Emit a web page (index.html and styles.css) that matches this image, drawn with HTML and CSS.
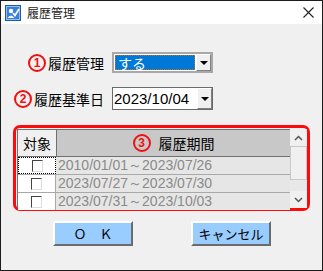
FILE: index.html
```html
<!DOCTYPE html>
<html lang="ja">
<head>
    <meta charset="UTF-8">
    <title>履歴管理</title>
    <link rel="stylesheet" href="styles.css">
</head>
<body>
    <div class="window">
        <div class="titlebar">
            <svg class="app-icon" width="16" height="16" viewBox="0 0 16 16">
                <rect x="0.5" y="0.5" width="15" height="15" fill="#3b7fd4" stroke="#1f5aa8"/>
                <rect x="1.5" y="1.5" width="13" height="13" fill="none" stroke="#8fc0f2"/>
                <circle cx="6" cy="6" r="2.2" fill="#fff"/>
                <path d="M2.5 13 Q6 8 9.5 13 Z" fill="#fff"/>
                <path d="M8 8 L10 10.5 L14 4" fill="none" stroke="#fff" stroke-width="1.8"/>
            </svg>
            <span class="title">履歴管理</span>
            <svg class="close" width="11" height="11" viewBox="0 0 11 11">
                <path d="M0.5 0.5 L10.5 10.5 M10.5 0.5 L0.5 10.5" stroke="#222" stroke-width="1.1"/>
            </svg>
        </div>
        <div class="content">
            <div class="form-row">
                <div class="label"><span class="num">1</span>履歴管理</div>
                <div class="combo light">
                    <div class="combo-value selected"><span>する</span></div>
                    <div class="combo-arrow"></div>
                </div>
            </div>
            <div class="form-row second">
                <div class="label"><span class="num">2</span>履歴基準日</div>
                <div class="combo dark">
                    <div class="combo-value date">2023/10/04</div>
                    <div class="combo-arrow"></div>
                </div>
            </div>
            <div class="history">
                <div class="grid">
                    <div class="head">
                        <div class="c1">対象</div>
                        <div class="c2"><span class="num">3</span>履歴期間</div>
                    </div>
                    <div class="row">
                        <div class="c1 focus"><span class="check"></span></div>
                        <div class="c2">2010/01/01～2023/07/26</div>
                    </div>
                    <div class="row">
                        <div class="c1"><span class="check"></span></div>
                        <div class="c2">2023/07/27～2023/07/30</div>
                    </div>
                    <div class="row">
                        <div class="c1"><span class="check"></span></div>
                        <div class="c2">2023/07/31～2023/10/03</div>
                    </div>
                </div>
                <div class="scrollbar">
                    <div class="sb-btn">
                        <svg width="9" height="6" viewBox="0 0 9 6"><path d="M1 5 L4.5 1.5 L8 5" fill="none" stroke="#555" stroke-width="1.5"/></svg>
                    </div>
                    <div class="sb-thumb"></div>
                    <div class="sb-track"></div>
                    <div class="sb-btn">
                        <svg width="9" height="6" viewBox="0 0 9 6"><path d="M1 1 L4.5 4.5 L8 1" fill="none" stroke="#555" stroke-width="1.5"/></svg>
                    </div>
                </div>
            </div>
            <div class="buttons">
                <button class="btn">Ｏ　Ｋ</button>
                <button class="btn">キャンセル</button>
            </div>
        </div>
    </div>
</body>
</html>
```

FILE: styles.css
```css
body {
    margin: 0;
    font-family: "Noto Sans CJK JP", sans-serif;
    color: #000;
}
.window {
    width: 323px;
    height: 271px;
    box-sizing: border-box;
    border: 1px solid #1c1c1c;
    background-color: #f0f0f0;
}
.titlebar {
    height: 23px;
    background-color: #fff;
    display: flex;
    align-items: center;
    padding-left: 4px;
}
.app-icon {
    margin-right: 6px;
}
.title {
    font-size: 12px;
    color: #222;
    flex: 1;
}
.close {
    margin-right: 8px;
}
.content {
    padding-top: 28px;
}
.form-row {
    display: flex;
    align-items: center;
    height: 21px;
}
.form-row.second {
    margin-top: 14px;
    height: 23px;
}
.label {
    width: 103px;
    display: flex;
    justify-content: flex-end;
    align-items: center;
    font-size: 14px;
    margin-right: 8px;
    white-space: nowrap;
}
.num {
    display: inline-flex;
    justify-content: center;
    align-items: center;
    width: 14px;
    height: 14px;
    border: 2px solid #f01010;
    border-radius: 50%;
    color: #f01010;
    font-family: "Liberation Sans", sans-serif;
    font-weight: bold;
    font-size: 12px;
    margin-right: 2px;
}
.combo {
    width: 101px;
    height: 100%;
    box-sizing: border-box;
    display: flex;
    background-color: #fff;
}
.combo.light {
    border: 2px solid #a8a8a8;
}
.combo.dark {
    border: 1px solid #6a6a6a;
}
.combo-value {
    flex: 1;
    display: flex;
    align-items: center;
}
.combo-value.selected {
    margin: 1px;
    border: 1px dotted #c07020;
    background-color: #0078d7;
    color: #fff;
    font-size: 14px;
    padding-left: 2px;
}
.combo-value.date {
    font-family: "Liberation Sans", sans-serif;
    font-size: 15px;
    padding-left: 1px;
}
.combo-arrow {
    width: 15px;
    box-sizing: border-box;
    border: 1px solid;
    border-color: #fff #808080 #808080 #fff;
    background-color: #f0f0f0;
    display: flex;
    justify-content: center;
    align-items: center;
}
.combo-arrow::after {
    content: "";
    border-left: 4px solid transparent;
    border-right: 4px solid transparent;
    border-top: 4px solid #000;
}
.history {
    margin: 15px 0 0 12px;
    width: 297px;
    height: 86px;
    box-sizing: border-box;
    border: 3px solid #ff0a0a;
    border-radius: 7px;
    padding: 1px 0 0 1px;
    display: flex;
}
.grid {
    width: 273px;
    border-left: 1px solid #707070;
}
.head {
    display: flex;
    height: 28px;
    border-top: 1px solid #707070;
    box-sizing: border-box;
}
.head .c1 {
    width: 38px;
    background-color: #f0f0f0;
    border-right: 1px solid #707070;
    border-bottom: 1px solid #707070;
    display: flex;
    align-items: center;
    justify-content: center;
    font-size: 14px;
}
.head .c2 {
    flex: 1;
    background-color: #c8c8c8;
    border-bottom: 1px solid #707070;
    display: flex;
    align-items: center;
    justify-content: center;
    font-size: 14px;
}
.head .c2 .num {
    margin-right: 8px;
}
.row {
    display: flex;
    height: 17px;
    border-bottom: 1px solid #a8a8a8;
}
.row:last-child {
    border-bottom: none;
}
.row .c1 {
    width: 38px;
    background-color: #fff;
    border-right: 1px solid #a8a8a8;
    display: flex;
    align-items: center;
    justify-content: center;
    box-sizing: border-box;
}
.row .c1.focus {
    border: 1px dotted #000;
}
.check {
    width: 9px;
    height: 10px;
    border: 1px solid;
    border-color: #444 #ddd #ddd #444;
    background-color: #fff;
}
.row .c2 {
    flex: 1;
    background-color: #e6e6e6;
    color: #8a8a8a;
    font-family: "Liberation Sans", sans-serif;
    font-size: 14px;
    line-height: 17px;
    padding-left: 2px;
    white-space: nowrap;
}
.scrollbar {
    width: 17px;
    display: flex;
    flex-direction: column;
    background-color: #f0f0f0;
}
.sb-btn {
    height: 17px;
    display: flex;
    align-items: center;
    justify-content: center;
}
.sb-thumb {
    height: 34px;
    box-sizing: border-box;
    border: 1px solid #c8c8c8;
    background-color: #f0f0f0;
}
.sb-track {
    flex: 1;
    background-color: #e8e8e8;
}
.buttons {
    display: flex;
    margin-top: 10px;
    padding-left: 52px;
    gap: 58px;
}
.btn {
    width: 80px;
    height: 25px;
    background-color: #99ccff;
    border: 2px solid;
    border-color: #fff #6b6b6b #6b6b6b #fff;
    font-family: "Noto Sans CJK JP", sans-serif;
    font-size: 13px;
    padding: 0;
    color: #000;
}
```
